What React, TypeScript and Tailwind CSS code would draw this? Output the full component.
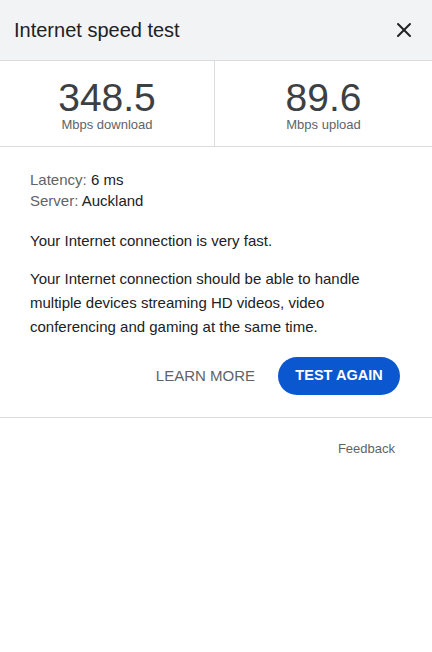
import { X } from 'lucide-react';

export default function App() {
  return (
    <div className="w-[432px] h-[652px] bg-white font-['Liberation_Sans',Arial,sans-serif]">
      {/* Header */}
      <div className="h-[61px] bg-[#f1f3f4] border-b border-[#dadce0] flex items-center justify-between pl-[14px] pr-[16px]">
        <h1 className="text-[20px] text-[#202124]">Internet speed test</h1>
        <X className="w-6 h-6 text-[#202124]" strokeWidth={2} />
      </div>

      {/* Stats */}
      <div className="grid grid-cols-[215px_1fr] h-[86px] border-b border-[#dadce0]">
        <div className="flex flex-col items-center pt-[17px] border-r border-[#dadce0]">
          <span className="text-[39px] leading-[39px] text-[#3c4043]">348.5</span>
          <span className="text-[13px] leading-[15px] text-[#5f6368]">Mbps download</span>
        </div>
        <div className="flex flex-col items-center pt-[17px]">
          <span className="text-[39px] leading-[39px] text-[#3c4043]">89.6</span>
          <span className="text-[13px] leading-[15px] text-[#5f6368]">Mbps upload</span>
        </div>
      </div>

      {/* Details */}
      <div className="px-[30px] pt-[22px] pb-[22px] border-b border-[#dadce0] text-[15px] text-[#202124]">
        <div className="leading-[21px]">
          <div><span className="text-[#5f6368]">Latency:</span> 6 ms</div>
          <div><span className="text-[#5f6368]">Server:</span> Auckland</div>
        </div>
        <p className="mt-[18px] leading-[24px]">Your Internet connection is very fast.</p>
        <p className="mt-[14px] leading-[24px]">
          Your Internet connection should be able to handle multiple devices streaming HD videos, video conferencing and gaming at the same time.
        </p>
        <div className="flex justify-end items-center gap-[23px] mt-[18px] mr-[2px]">
          <button className="text-[15px] text-[#5f6368]">LEARN MORE</button>
          <button className="h-[38px] w-[122px] rounded-full bg-[#0b57d0] text-white text-[14.5px] font-bold">TEST AGAIN</button>
        </div>
      </div>

      {/* Footer */}
      <div className="flex justify-end pr-[37px] pt-[21px]">
        <span className="text-[13px] text-[#5f6368]">Feedback</span>
      </div>
    </div>
  );
}
